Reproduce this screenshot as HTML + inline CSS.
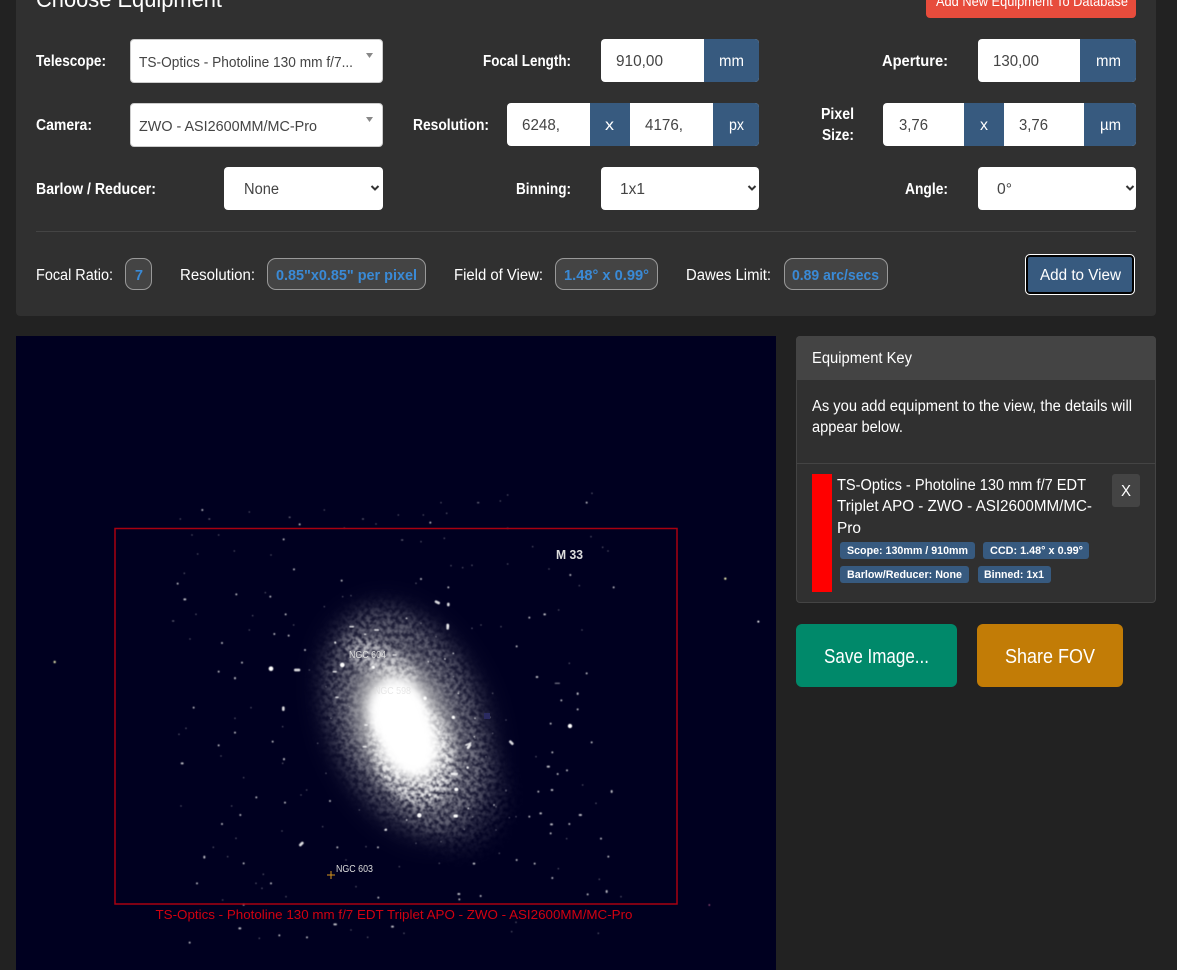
<!DOCTYPE html>
<html lang="en"><head><meta charset="utf-8"><title>Choose Equipment</title>
<style>
html,body{margin:0;padding:0;background:#222;width:1177px;height:970px;overflow:hidden}
.b{position:absolute;box-sizing:border-box}
.w{background:#fff;border-radius:4px}
.a{background:#375a7f}
.s{background:#fff;border:1px solid #ccc;border-radius:4px}
.p{background:#444;border:1px solid #999;border-radius:9px}
.t{background:#375a7f;border-radius:3px}
svg{position:absolute;left:0;top:0}
text{font-family:"Liberation Sans",Arial,sans-serif;fill:#fff;white-space:pre}
.l{font-size:15.5px;font-weight:700}
.n{font-size:15.5px}
.d{font-size:15.5px;fill:#444}
.u{font-size:15px;font-weight:700;fill:#3a8ad6}
.k{font-size:11px;font-weight:700}
.i{font-family:"Liberation Sans",Arial,sans-serif;fill:#ddd}
</style></head>
<body>
<div class="b" style="left:16px;top:-40px;width:1140px;height:356px;background:#303030;border-radius:4px"></div>
<div class="b" style="left:926px;top:-20px;width:210px;height:38px;background:#e74c3c;border-radius:4px"></div>

<div class="b s" style="left:130px;top:39px;width:253px;height:44px"></div>
<div class="b s" style="left:130px;top:103px;width:253px;height:44px"></div>
<div class="b w" style="left:224px;top:167px;width:159px;height:43px"></div>

<div class="b w" style="left:601px;top:39px;width:158px;height:43px"></div>
<div class="b a" style="left:704px;top:39px;width:55px;height:43px;border-radius:0 4px 4px 0"></div>
<div class="b w" style="left:978px;top:39px;width:158px;height:43px"></div>
<div class="b a" style="left:1080px;top:39px;width:56px;height:43px;border-radius:0 4px 4px 0"></div>

<div class="b w" style="left:507px;top:103px;width:252px;height:43px"></div>
<div class="b a" style="left:590px;top:103px;width:40px;height:43px"></div>
<div class="b a" style="left:713px;top:103px;width:46px;height:43px;border-radius:0 4px 4px 0"></div>
<div class="b w" style="left:883px;top:103px;width:253px;height:43px"></div>
<div class="b a" style="left:964px;top:103px;width:40px;height:43px"></div>
<div class="b a" style="left:1084px;top:103px;width:52px;height:43px;border-radius:0 4px 4px 0"></div>

<div class="b w" style="left:601px;top:167px;width:158px;height:43px"></div>
<div class="b w" style="left:978px;top:167px;width:158px;height:43px"></div>

<div class="b" style="left:36px;top:231px;width:1100px;height:1px;background:#444"></div>

<div class="b p" style="left:125px;top:258px;width:27px;height:32px"></div>
<div class="b p" style="left:267px;top:258px;width:159px;height:32px"></div>
<div class="b p" style="left:555px;top:258px;width:103px;height:32px"></div>
<div class="b p" style="left:784px;top:258px;width:104px;height:32px"></div>
<div class="b" style="left:1026px;top:255px;width:108px;height:39px;background:#375a7f;border:2px solid #000;outline:1px solid #fff;border-radius:4px"></div>

<!-- star image -->
<svg class="b" style="left:16px;top:336px" width="760" height="634" viewBox="16 336 760 634">
<defs>
<filter id="bl" x="-50%" y="-50%" width="200%" height="200%"><feGaussianBlur stdDeviation="20"/></filter>
<filter id="bm" x="-50%" y="-50%" width="200%" height="200%"><feGaussianBlur stdDeviation="10"/></filter>
<filter id="bs" x="-50%" y="-50%" width="200%" height="200%"><feGaussianBlur stdDeviation="5"/></filter>
<filter id="mot" x="-20%" y="-20%" width="140%" height="140%">
<feTurbulence type="fractalNoise" baseFrequency=".24" numOctaves="2" seed="7" result="n"/>
<feColorMatrix in="n" type="matrix" values="0 0 0 0 1  0 0 0 0 1  0 0 0 0 1  2.6 0 0 0 -.8" result="m"/>
<feGaussianBlur in="m" stdDeviation=".6" result="mb"/>
<feComposite in="SourceGraphic" in2="mb" operator="in"/>
</filter>
<filter id="st" x="-20%" y="-20%" width="140%" height="140%"><feGaussianBlur stdDeviation=".45"/></filter>
</defs>
<rect x="16" y="336" width="760" height="634" fill="#000020"/>
<ellipse cx="408" cy="722" rx="68" ry="112" transform="rotate(-22 408 722)" fill="#8a8a8a" opacity=".36" filter="url(#bl)"/>
<g filter="url(#mot)">
<ellipse cx="406" cy="720" rx="74" ry="116" transform="rotate(-22 406 720)" fill="#fff" opacity=".3" filter="url(#bm)"/>
<ellipse cx="460" cy="795" rx="46" ry="55" fill="#fff" opacity=".13" filter="url(#bm)"/>
</g>
<ellipse cx="403" cy="724" rx="45" ry="66" transform="rotate(-22 403 724)" fill="#c4c4c4" opacity=".8" filter="url(#bm)"/>
<ellipse cx="397" cy="710" rx="29" ry="32" transform="rotate(-15 397 710)" fill="#fff" filter="url(#bs)"/>
<ellipse cx="407" cy="737" rx="29" ry="42" transform="rotate(-22 407 737)" fill="#fff" filter="url(#bs)"/>
<g filter="url(#mot)">
<ellipse cx="412" cy="750" rx="40" ry="58" transform="rotate(-22 412 750)" fill="#fff" opacity=".8" filter="url(#bs)"/>
<ellipse cx="382" cy="662" rx="40" ry="16" transform="rotate(30 382 662)" fill="#fff" opacity=".55" filter="url(#bs)"/>
</g>
<g fill="none" stroke="#fff" stroke-linecap="round" filter="url(#st)">
<g transform="translate(16,480) scale(.33333)">
<path stroke-width="4" opacity=".42" d="M579 117h2M700 96h0M820 112h2M608 165h0M528 165h0M493 117h0M655 213h0M765 225h0M545 222h0M505 280h0M748 338h0M540 403h0M710 407h0M833 435h0M700 450h0M470 423h3M522 477h0M489 763h0M510 745h0M657 715h0M705 683h0M800 740h0M615 828h0M683 893h0M800 850h0M855 945h0M872 930h0M495 978h0M647 978h0M660 1075h0M798 1053h0M592 1102h0M635 1130h0M742 1183h0M720 1210h0M738 1225h0M1040 117h2M1080 132h0M925 90h0M985 144h0M1047 463h3M1005 347h0M980 350h0M925 380h0M1010 440h0M880 570h0M930 620h0M945 715h0M1000 680h0M905 790h0M930 880h0M1030 990h0M1050 1100h0M990 1140h0M920 1040h0M1130 960h0M1020 1220h0M620 1260h0M810 1250h0M730 1375h0M1005 1350h0M1055 1372h0"/>
<path stroke-width="6" opacity=".72" d="M559 90h0M851 133h0M803 178h0M834 268h0M977 302h0M661 343h0M505 358h3M485 311h0M763 350h0M809 403h0M618 489h0M775 462h0M818 467h0M958 487v2M867 510h0M678 548h0M608 575h0M657 594v1M533 683h0M804 837v1M497 850h3M608 796h0M657 758h0M770 785h0M721 952h0M807 968h0M942 963h0M673 1005h0M618 1032h0M683 1150h0M565 1130v3M543 1210h0M765 1210h0M964 1102h0M1086 1102h0M1087 1253h0M1110 1048h0M683 1274h0M670 1345h3M790 1366h0M873 1372h0M955 1333h5M1128 1340h3M521 1388h0"/>
<path stroke-width="14" d="M765 566h0M979 555h0"/>
<path stroke-width="8" opacity=".85" d="M838 570h11M802 683v6M853 1095l6-6"/>
<path stroke-width="7" stroke="#e8e8b0" d="M116 546h0"/>
</g>
<g transform="translate(396,480) scale(.33333)">
<path stroke-width="4" opacity=".42" d="M135 68h0M245 68h3M313 63h0M335 45h0M588 40h0M82 105h0M152 100h0M7 105h0M17 180h3M75 185h0M145 175h0M335 145h0M459 267h0M550 317h0M488 390h0M620 202h0M636 213h0M335 252h0M200 263h0M228 256h0M165 257h0M255 435h0M228 445h0M315 440h0M146 537h0M172 590h0M105 545h0M188 635h0M237 775h0M330 930v3M300 980h0M205 1048h0M135 1085h0M24 1360h0M360 1327h0M347 1355h0M607 1360h0M675 1250h0M610 1198h0M487 1166h0M512 1076h0M360 1010h0M340 1013h0M478 610h12M558 450h0M520 550h0M585 170h0M410 200h0M60 310h0M75 430h0M30 415h0M120 470h0M290 640h0M330 720h0M420 830h0M560 915h0M600 970h0M310 1120h0M130 1150h0M10 1160h0M60 1090h0M230 1010h0M300 1050h0M290 760h0M270 830h0M140 945h0M90 960h0"/>
<path stroke-width="6" opacity=".72" d="M280 712h0M545 640v2M572 580h0M422 591h2M545 688h0M496 661h0M464 731h0M587 787h0M469 817h0M455 860h4M485 882h0M513 871h0M427 935h0M467 930h2M647 933v3M551 1005h4M465 1033h3M520 1032h0M400 1010h0M433 1000h2M464 1060h0M615 1076h0M637 1130h0M416 1151h0M362 1140h0M233 1151h2M469 1194h0M632 1233v3M575 1243h0M187 1242h3M254 1248h0M190 1258h0M157 322h0M75 297h0M103 128h0M572 68h0M523 285h0M653 322h0M400 413h0M445 403h2M362 499h0M85 655h3"/>
<path stroke-width="8" opacity=".85" d="M172 713h1M177 1008h3M157 372v3M120 365l8 4M168 882h14M215 863h0M180 929h0M343 785l6 6M155 435v10M222 795l-6 8"/>
<path stroke-width="13" d="M522 738h0M70 1006h0"/>
<path stroke-width="7" stroke="#e8e8b0" d="M988 296h0"/>
<path stroke-width="6" d="M1087 425h0"/>
<path stroke-width="5" stroke="#a05080" d="M940 1275h0"/>
</g>
<g transform="translate(330,610) scale(.33333)">
<path stroke-width="5" opacity=".8" d="M15 97h0M105 73h0M230 25h0M355 45v6M10 185h8M18 262h6M345 147h0M295 155h0M370 130h0M105 345h6M100 410h8M385 250h0M338 385h0M435 325h0M433 380h0M408 405l14 -6M412 472h0M190 135h8M60 50h10M135 60h10M165 500h0M300 555h0M415 595h0M492 585h0M230 630h0M165 660h4"/>
<path stroke-width="10" d="M130 172h0M285 265h0M370 322h0M375 618h4M378 538h2M38 165h0"/>
</g>
</g>
<rect x="484" y="713" width="6" height="6" fill="#2a2a60"/>
<rect x="115" y="528.500" width="562" height="375.500" fill="none" stroke="#a80010" stroke-width="1.500"/>
<text class="i" x="556" y="559" font-size="12.500" font-weight="700" textLength="27" lengthAdjust="spacingAndGlyphs">M 33</text>
<text class="i" x="349" y="658" font-size="10.500" textLength="37" lengthAdjust="spacingAndGlyphs">NGC 604</text>
<text class="i" x="374" y="694" font-size="10.500" textLength="37" lengthAdjust="spacingAndGlyphs" opacity=".7">NGC 598</text>
<text class="i" x="336" y="872" font-size="10.500" textLength="37" lengthAdjust="spacingAndGlyphs">NGC 603</text>
<path d="M327 875h8M331 871v8" stroke="#d8961e" stroke-width="1" fill="none"/>
<text x="155.500" y="919" font-size="12.500" style="fill:#d00010" textLength="477" lengthAdjust="spacingAndGlyphs">TS-Optics - Photoline 130 mm f/7 EDT Triplet APO - ZWO - ASI2600MM/MC-Pro</text>
</svg>

<!-- right column boxes -->
<div class="b" style="left:796px;top:336px;width:360px;height:267px;background:#303030;border:1px solid #444;border-radius:4px"></div>
<div class="b" style="left:796px;top:336px;width:360px;height:44px;background:#444;border-radius:4px 4px 0 0"></div>
<div class="b" style="left:797px;top:463px;width:358px;height:1px;background:#444"></div>
<div class="b" style="left:812px;top:474px;width:20px;height:118px;background:#f00"></div>
<div class="b" style="left:1112px;top:474px;width:28px;height:33px;background:#444;border-radius:3px"></div>
<div class="b t" style="left:840px;top:542px;width:135px;height:17px"></div>
<div class="b t" style="left:983px;top:542px;width:106px;height:17px"></div>
<div class="b t" style="left:840px;top:566px;width:129px;height:17px"></div>
<div class="b t" style="left:978px;top:566px;width:73px;height:17px"></div>
<div class="b" style="left:796px;top:624px;width:161px;height:63px;background:#00896a;border-radius:6px"></div>
<div class="b" style="left:977px;top:624px;width:146px;height:63px;background:#c27c06;border-radius:6px"></div>

<!-- text layer -->
<svg width="1177" height="970" viewBox="0 0 1177 970">
<text x="36" y="7" font-size="23" textLength="186" lengthAdjust="spacingAndGlyphs">Choose Equipment</text>
<text x="936" y="6" font-size="13.500" textLength="192" lengthAdjust="spacingAndGlyphs">Add New Equipment To Database</text>

<text class="l" x="36" y="66" textLength="70" lengthAdjust="spacingAndGlyphs">Telescope:</text>
<text class="l" x="483" y="66" textLength="88" lengthAdjust="spacingAndGlyphs">Focal Length:</text>
<text class="l" x="882" y="66" textLength="66" lengthAdjust="spacingAndGlyphs">Aperture:</text>
<text class="l" x="36" y="130" textLength="56" lengthAdjust="spacingAndGlyphs">Camera:</text>
<text class="l" x="413" y="130" textLength="76" lengthAdjust="spacingAndGlyphs">Resolution:</text>
<text class="l" x="821" y="119" textLength="33" lengthAdjust="spacingAndGlyphs">Pixel</text>
<text class="l" x="822" y="140" textLength="32" lengthAdjust="spacingAndGlyphs">Size:</text>
<text class="l" x="36" y="194" textLength="120" lengthAdjust="spacingAndGlyphs">Barlow / Reducer:</text>
<text class="l" x="516" y="194" textLength="55" lengthAdjust="spacingAndGlyphs">Binning:</text>
<text class="l" x="905" y="194" textLength="43" lengthAdjust="spacingAndGlyphs">Angle:</text>

<text class="d" x="139" y="67" style="font-size:14.5px" textLength="214" lengthAdjust="spacingAndGlyphs">TS-Optics - Photoline 130 mm f/7...</text>
<text class="d" x="139" y="131" style="font-size:14.5px" textLength="178" lengthAdjust="spacingAndGlyphs">ZWO - ASI2600MM/MC-Pro</text>
<text class="d" x="244" y="194" textLength="35" lengthAdjust="spacingAndGlyphs">None</text>
<text class="d" x="620" y="194" textLength="25" lengthAdjust="spacingAndGlyphs">1x1</text>
<text class="d" x="997" y="194" textLength="15" lengthAdjust="spacingAndGlyphs">0°</text>
<path d="M366 53h7l-3.500 5zM366 117h7l-3.500 5z" fill="#888"/>
<path d="M371.500 186l3.500 3.500 3.500-3.500M748.500 186l3.500 3.500 3.500-3.500M1126.500 186l3.500 3.500 3.500-3.500" fill="none" stroke="#333" stroke-width="2"/>

<text class="d" x="616" y="66" textLength="47" lengthAdjust="spacingAndGlyphs">910,00</text>
<text class="n" x="719" y="66" textLength="25" lengthAdjust="spacingAndGlyphs">mm</text>
<text class="d" x="993" y="66" textLength="46" lengthAdjust="spacingAndGlyphs">130,00</text>
<text class="n" x="1096" y="66" textLength="25" lengthAdjust="spacingAndGlyphs">mm</text>
<text class="d" x="522" y="130" textLength="38" lengthAdjust="spacingAndGlyphs">6248,</text>
<text class="n" x="605" y="130" textLength="9" lengthAdjust="spacingAndGlyphs">x</text>
<text class="d" x="645" y="130" textLength="38" lengthAdjust="spacingAndGlyphs">4176,</text>
<text class="n" x="729" y="130" textLength="15" lengthAdjust="spacingAndGlyphs">px</text>
<text class="d" x="899" y="130" textLength="29" lengthAdjust="spacingAndGlyphs">3,76</text>
<text class="n" x="980" y="130" textLength="8" lengthAdjust="spacingAndGlyphs">x</text>
<text class="d" x="1019" y="130" textLength="29" lengthAdjust="spacingAndGlyphs">3,76</text>
<text class="n" x="1100" y="130" textLength="21" lengthAdjust="spacingAndGlyphs">µm</text>

<text class="n" x="36" y="280" textLength="77" lengthAdjust="spacingAndGlyphs">Focal Ratio:</text>
<text class="n" x="180" y="280" textLength="75" lengthAdjust="spacingAndGlyphs">Resolution:</text>
<text class="n" x="454" y="280" textLength="89" lengthAdjust="spacingAndGlyphs">Field of View:</text>
<text class="n" x="686" y="280" textLength="85" lengthAdjust="spacingAndGlyphs">Dawes Limit:</text>
<text class="u" x="135" y="280" textLength="8" lengthAdjust="spacingAndGlyphs">7</text>
<text class="u" x="276" y="280" textLength="141" lengthAdjust="spacingAndGlyphs">0.85"x0.85" per pixel</text>
<text class="u" x="564" y="280" textLength="85" lengthAdjust="spacingAndGlyphs">1.48° x 0.99°</text>
<text class="u" x="792" y="280" textLength="87" lengthAdjust="spacingAndGlyphs">0.89 arc/secs</text>
<text class="n" x="1040" y="280" textLength="81" lengthAdjust="spacingAndGlyphs">Add to View</text>

<text class="n" x="812" y="363" textLength="100" lengthAdjust="spacingAndGlyphs">Equipment Key</text>
<text class="n" x="812" y="411" textLength="320" lengthAdjust="spacingAndGlyphs">As you add equipment to the view, the details will</text>
<text class="n" x="812" y="432" textLength="91" lengthAdjust="spacingAndGlyphs">appear below.</text>
<text class="n" x="837" y="490" textLength="249" lengthAdjust="spacingAndGlyphs">TS-Optics - Photoline 130 mm f/7 EDT</text>
<text class="n" x="837" y="511" textLength="255" lengthAdjust="spacingAndGlyphs">Triplet APO - ZWO - ASI2600MM/MC-</text>
<text class="n" x="837" y="533" textLength="24" lengthAdjust="spacingAndGlyphs">Pro</text>
<text class="n" x="1121" y="496" textLength="10" lengthAdjust="spacingAndGlyphs">X</text>
<text class="k" x="847" y="554" textLength="121" lengthAdjust="spacingAndGlyphs">Scope: 130mm / 910mm</text>
<text class="k" x="990" y="554" textLength="93" lengthAdjust="spacingAndGlyphs">CCD: 1.48° x 0.99°</text>
<text class="k" x="847" y="578" textLength="115" lengthAdjust="spacingAndGlyphs">Barlow/Reducer: None</text>
<text class="k" x="984" y="578" textLength="60" lengthAdjust="spacingAndGlyphs">Binned: 1x1</text>
<text x="824" y="663" font-size="20" textLength="105" lengthAdjust="spacingAndGlyphs">Save Image...</text>
<text x="1005" y="663" font-size="20" textLength="90" lengthAdjust="spacingAndGlyphs">Share FOV</text>
</svg>
</body></html>
